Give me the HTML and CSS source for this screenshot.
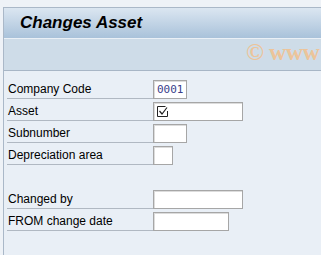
FILE: index.html
```html
<!DOCTYPE html>
<html lang="en">
<head>
  <meta charset="UTF-8" />
  <title>Changes Asset</title>
  <link rel="stylesheet" href="styles.css">
</head>
<body>
  <div class="frame">
    <header class="titlebar">
      <h1>Changes Asset</h1>
    </header>

    <div class="toolbar">
      <span class="watermark">&copy; www</span>
    </div>

    <main class="content">
      <div class="row">
        <label>Company Code</label>
        <div class="field w34 value">0001</div>
      </div>
      <div class="row">
        <label>Asset</label>
        <div class="field w90">
          <svg class="check" width="11" height="11" viewBox="0 0 11 11">
            <path d="M0.5 0.5 H8.5 M0.5 0.5 V10.5 H10.5 V5" fill="none" stroke="#222" stroke-width="1"/>
            <path d="M2.5 5 L5 8 L10 1.5" fill="none" stroke="#222" stroke-width="1.2"/>
          </svg>
        </div>
      </div>
      <div class="row">
        <label>Subnumber</label>
        <div class="field w34"></div>
      </div>
      <div class="row">
        <label>Depreciation area</label>
        <div class="field w20"></div>
      </div>

      <div class="row empty"></div>

      <div class="row">
        <label>Changed by</label>
        <div class="field w90"></div>
      </div>
      <div class="row">
        <label>FROM change date</label>
        <div class="field w76"></div>
      </div>
    </main>
  </div>
</body>
</html>
```

FILE: styles.css
```css
* {
  box-sizing: border-box;
}

body {
  margin: 0;
  background-color: #eef2f7;
  font-family: 'Liberation Sans', Arial, sans-serif;
  color: #000;
  overflow: hidden;
}

.frame {
  margin-top: 7px;
  margin-left: 3px;
  border-left: 1px solid #aab8c8;
  border-top: 1px solid #aab8c8;
  min-height: 248px;
  background-color: #e9eff6;
}

/* Title bar */
.titlebar {
  height: 30px;
  background: linear-gradient(#dbe6f1, #a9c2da);
  padding-left: 16px;
  display: flex;
  align-items: center;
}

.titlebar h1 {
  margin: 0;
  font-size: 17px;
  font-weight: bold;
  font-style: italic;
  color: #000;
}

/* Toolbar */
.toolbar {
  height: 33px;
  background-color: #cedce8;
  border-top: 1px solid #eaf0f6;
  border-bottom: 1px solid #a8b6c6;
  position: relative;
  overflow: hidden;
}

.watermark {
  position: absolute;
  left: 242px;
  top: 0;
  white-space: nowrap;
  font-family: 'Liberation Serif', 'Times New Roman', serif;
  font-size: 24px;
  font-weight: bold;
  letter-spacing: -0.5px;
  color: #ecc49a;
}

/* Form */
.content {
  padding: 9px 0 0 3px;
}

.row {
  display: flex;
  height: 19px;
  margin-bottom: 3px;
}

.row label {
  width: 146px;
  border-bottom: 1px solid #b0b8c2;
  font-size: 12px;
  line-height: 19px;
  padding-left: 1px;
}

.field {
  height: 19px;
  background-color: #fff;
  border: 1px solid #a6a6a6;
  box-shadow: inset 1px 1px 0 #dcdcdc;
  font-size: 12px;
  line-height: 17px;
  padding-left: 3px;
}

.value {
  font-family: 'DejaVu Sans Mono', 'Liberation Mono', monospace;
  font-size: 11px;
  color: #3a3e8a;
}

.check {
  display: block;
  margin-top: 3px;
}

.w20 { width: 20px; }
.w34 { width: 34px; }
.w76 { width: 76px; }
.w90 { width: 90px; }
```
